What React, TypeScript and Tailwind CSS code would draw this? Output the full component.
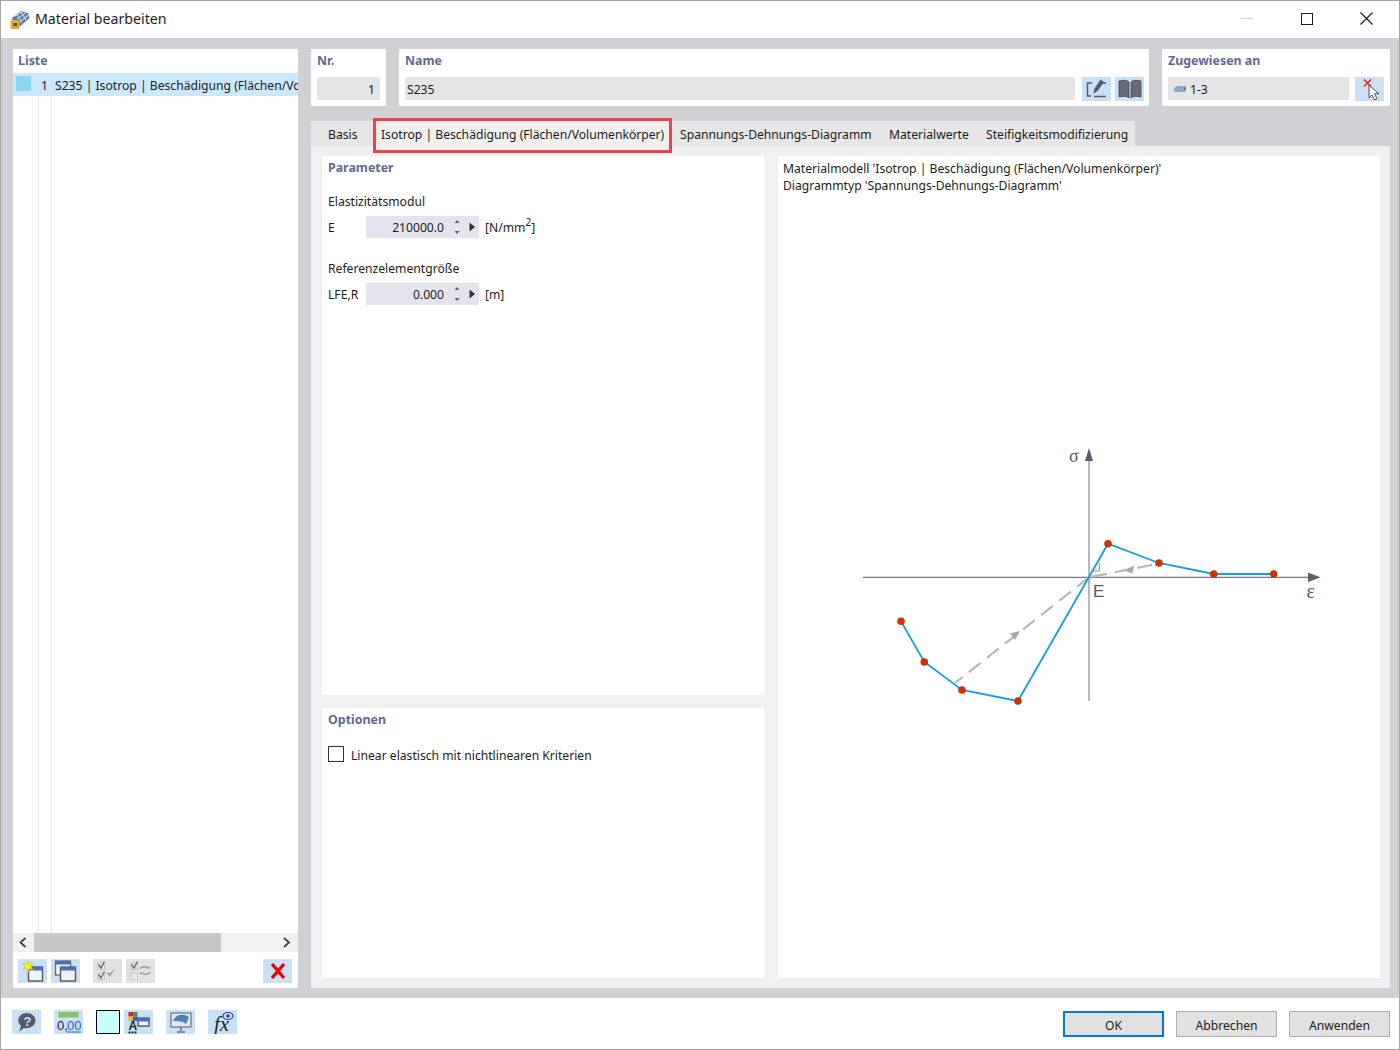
import React from "react";

const label = "text-[12.4px] leading-[16px] font-bold text-[#5f6a94]";

function IconBtn({ children, grey, className = "" }: { children?: React.ReactNode; grey?: boolean; className?: string }) {
  return (
    <div className={`w-[29px] h-[24px] flex items-center justify-center shrink-0 ${grey ? "bg-[#e2e2e2]" : "bg-[#c8e1f7]"} ${className}`}>
      <svg width="24" height="24" viewBox="0 0 24 24">{children}</svg>
    </div>
  );
}

function Win({ x, y, w = 13, h = 13, dark = "#55585f" }: { x: number; y: number; w?: number; h?: number; dark?: string }) {
  return (
    <g>
      <rect x={x} y={y} width={w} height={h} fill="#f2f2f2" stroke={dark} strokeWidth="1.4" />
      <rect x={x} y={y} width={w} height="3.5" fill="#4a6fb5" />
    </g>
  );
}

function Field({ sym, value, unit }: { sym: string; value: string; unit: React.ReactNode }) {
  return (
    <div className="flex items-center h-[22px]">
      <div className="w-[38px] pt-px">{sym}</div>
      <div className="w-[113px] h-[22px] bg-[#e4e4ef] flex items-center">
        <div className="w-[78px] text-right pt-px">{value}</div>
        <svg width="35" height="22" viewBox="0 0 35 22">
          <path d="M10.500 7l2.500-3 2.500 3zM10.500 15l2.500 3 2.500-3z" fill="#666" />
          <path d="M25.500 6.500l5.500 4.500-5.500 4.500z" fill="#333" />
        </svg>
      </div>
      <div className="ml-[6px] pt-px">{unit}</div>
    </div>
  );
}

function Tab({ w, pl, text, active }: { w: string; pl: string; text: string; active?: boolean }) {
  return (
    <div className={`relative h-[25px] flex items-center pt-[2px] ${w} ${pl} ${active ? "bg-[#f0f0f0]" : "bg-[#e6e6e6]"}`}>
      {text}
      {active && <div className="absolute left-0 right-0 top-[-3px] bottom-[-7px] border-[3px] border-[#f0404e]" />}
    </div>
  );
}

function Diagram() {
  const blue = "#149fdc";
  const red = "#cc3300";
  const pts = [[1108, 543.7], [1159, 563], [1213.7, 574], [1273.7, 574], [901, 621.3], [924.3, 662], [962, 690], [1018, 701]];
  return (
    <svg className="block flex-1 w-full" viewBox="778 193 602 785">
      <line x1="1089" y1="458" x2="1089" y2="701" stroke="#b0b0bc" strokeWidth="1.8" />
      <path d="M1085 461l4-13 4 13z" fill="#5a5c72" />
      <line x1="863" y1="577.3" x2="1310" y2="577.3" stroke="#77788c" strokeWidth="1.2" />
      <path d="M1308 572.5l12.5 4.800-12.500 4.800z" fill="#5a5c72" />
      <path d="M1091.7 571h7.600v-8" fill="none" stroke="#8a8a9c" strokeWidth="1" />
      <path d="M1152 565L1089 577.3M1089 577.3L955 683" fill="none" stroke="#b6b6c0" strokeWidth="2.200" strokeDasharray="15 8" />
      <path d="M1124 570.500l10-5-1.500 8z" fill="#a8a8b4" />
      <path d="M1020 631l-10 2.500 5 6.500z" fill="#a8a8b4" />
      <polyline points="901,621.3 924.3,662 962,690 1018,701 1108,543.7 1159,563 1213.7,574 1273.7,574" fill="none" stroke={blue} strokeWidth="1.800" />
      {pts.map(([x, y]) => (
        <circle key={x} cx={x} cy={y} r="3.800" fill={red} />
      ))}
      <text x="1069" y="462" fontSize="18" fill="#555a70" fontFamily="'Liberation Serif', serif">σ</text>
      <text x="1093" y="597" fontSize="17" fill="#555a70" fontFamily="'Liberation Sans', sans-serif">E</text>
      <text x="1306.500" y="598" fontSize="20" fill="#555a70" fontFamily="'Liberation Serif', serif">ε</text>
    </svg>
  );
}

export default function App() {
  return (
    <div className="w-[1400px] h-[1050px] flex flex-col bg-white border border-[#a6a6a6] text-[12.15px] leading-[16px] text-[#1c1c1c] font-['Noto_Sans',sans-serif] overflow-hidden">
      {/* title bar */}
      <div className="h-[37px] flex items-center shrink-0">
        <svg className="ml-[8px]" width="22" height="22" viewBox="0 0 22 22">
          <path d="M3 9l9-7 7 2 1.500 5-9 8-6-2z" fill="#5f7aa8" />
          <path d="M6 7l8-5M8 10l9-6.500M10.500 13l9-7M8 5l5 9M12 3l5 8" stroke="#c4d2e8" strokeWidth="1.100" />
          <rect x="1.500" y="11" width="9" height="9" rx="1.500" fill="#d9ad28" />
          <rect x="4.500" y="14" width="3.500" height="3" fill="#5c4a10" />
        </svg>
        <div className="ml-[4px] text-[14.2px] -mt-[1px]">Material bearbeiten</div>
        <div className="ml-auto flex items-center -mt-[2px]">
          <div className="w-[13px] h-px bg-[#d0d0d0]" />
          <div className="ml-[47px] w-[12px] h-[12px] border-[1.5px] border-[#222]" />
          <svg className="ml-[47px] mr-[26px]" width="13" height="13" viewBox="0 0 13 13">
            <path d="M.5.5l12 12M12.500.5l-12 12" stroke="#222" strokeWidth="1.300" />
          </svg>
        </div>
      </div>

      {/* body */}
      <div className="flex-1 bg-[#d0d0d5] flex gap-[13px] pl-[12px] pt-[11px] pb-[10px] min-h-0">
        {/* list */}
        <div className="w-[285px] bg-white flex flex-col">
          <div className={`${label} pl-[5px] pt-[4px] h-[24px]`}>Liste</div>
          <div className="h-[23px] bg-[#cce8ff] flex items-center whitespace-nowrap overflow-hidden">
            <div className="ml-[3px] w-[15px] h-[15px] bg-[#91d7f5] shrink-0 -mt-[2px]" />
            <div className="w-[17px] text-right shrink-0 pt-[2px]">1</div>
            <div className="ml-[7px] pt-[2px]">S235 | Isotrop | Beschädigung (Flächen/Volumenkörper)</div>
          </div>
          <div className="flex-1 flex">
            <div className="ml-[25px] w-[14px] border-x border-[#ebebeb]" />
          </div>
          <div className="h-[19px] bg-[#f0f0f0] flex items-center">
            <svg className="w-[21px] shrink-0" width="21" height="19" viewBox="0 0 21 19">
              <path d="M12.500 5l-5 4.500 5 4.500" fill="none" stroke="#444" strokeWidth="1.800" />
            </svg>
            <div className="w-[187px] h-[19px] bg-[#c8c8c8]" />
            <svg className="ml-auto" width="21" height="19" viewBox="0 0 21 19">
              <path d="M7 5l5 4.500-5 4.500" fill="none" stroke="#444" strokeWidth="1.800" />
            </svg>
          </div>
          <div className="h-[36px] flex items-start pt-[7px] pl-[5px]">
            <IconBtn>
              <Win x={7.500} y={8} w={14} h={14} />
              <path d="M7 2l1.500 3 3.500-.5-2 3 2 3-3.500-.8L7 13l-1.300-3.300-3.500.8 2-3-2-3 3.500.5z" fill="#f7ee1e" stroke="#c4b800" strokeWidth=".5" />
            </IconBtn>
            <IconBtn className="ml-[4px]">
              <Win x={1.500} y={2} w={15} h={14} dark="#6a7080" />
              <Win x={6.500} y={8} w={15} h={14} />
            </IconBtn>
            <IconBtn grey className="ml-[13px]">
              <rect x="2" y="4" width="6.500" height="6.500" fill="#e8e8e8" stroke="#bbb" strokeWidth=".8" />
              <rect x="2" y="14" width="6.500" height="6.500" fill="#e8e8e8" stroke="#bbb" strokeWidth=".8" />
              <path d="M2.500 5.500l2.500 3.500 3.500-6.500M2.500 15.500l2.500 3.500 3.500-6.500" fill="none" stroke="#6a6a6a" strokeWidth="1.400" />
              <path d="M10.500 13l3 5 6-9-6 5.500z" fill="#999" />
            </IconBtn>
            <IconBtn grey className="ml-[4px]">
              <rect x="2" y="4" width="6.500" height="6.500" fill="#e8e8e8" stroke="#bbb" strokeWidth=".8" />
              <rect x="2" y="14" width="6.500" height="6.500" fill="#eaeaea" stroke="#c4c4c4" strokeWidth=".8" />
              <path d="M2.500 5.500l2.500 3.500 3.500-6.500" fill="none" stroke="#6a6a6a" strokeWidth="1.400" />
              <path d="M11 10c1-2.500 6-3 8-1l2-.5M21 13c-1 2.500-6 3-8 1l-2 .5" fill="none" stroke="#999" strokeWidth="1.500" />
            </IconBtn>
            <IconBtn className="ml-auto mr-[6px]">
              <path d="M6 5l12 14M18 5L6 19" stroke="#f00000" strokeWidth="3.400" />
            </IconBtn>
          </div>
        </div>

        {/* right */}
        <div className="w-[1079px] flex flex-col">
          <div className="h-[57px] flex gap-[13px] shrink-0">
            <div className="w-[75px] bg-white px-[6px] pt-[4px]">
              <div className={label}>Nr.</div>
              <div className="mt-[8px] h-[23px] bg-[#e5e5e5] flex items-center justify-end pr-[5px] pt-[3px]">1</div>
            </div>
            <div className="w-[750px] bg-white px-[6px] pt-[4px]">
              <div className={label}>Name</div>
              <div className="mt-[8px] flex">
                <div className="w-[670px] h-[23px] shrink-0 bg-[#e5e5e5] flex items-center pl-[2px] pt-[3px]">S235</div>
                <IconBtn className="ml-[7px]">
                  <path d="M7 6H2.500v13H6M9 19.500h12M18 6h3" fill="none" stroke="#555c66" strokeWidth="1.500" />
                  <path d="M8.500 17l1-5.500L15.500 2.500l3.500 2.500-6 8.500z" fill="#555c66" />
                </IconBtn>
                <IconBtn className="ml-[4px]">
                  <path d="M1 4c4-1 8-1 10 1v16c-2-2-6-2-10-1zM23 4c-4-1-8-1-10 1v16c2-2 6-2 10-1z" fill="#666c76" stroke="#44484f" strokeWidth=".8" />
                </IconBtn>
              </div>
            </div>
            <div className="w-[228px] bg-white px-[6px] pt-[4px]">
              <div className={label}>Zugewiesen an</div>
              <div className="mt-[8px] flex">
                <div className="w-[181px] h-[23px] bg-[#e5e5e5] flex items-center pl-[6px]">
                  <svg width="12" height="8" viewBox="0 0 12 8">
                    <path d="M0 3l3-2h9l-2 2v4H0z" fill="#8fa8c8" />
                    <path d="M10 3l2-2v4l-2 2z" fill="#5f7ea8" />
                  </svg>
                  <span className="ml-[4px] pt-[3px]">1-3</span>
                </div>
                <IconBtn className="ml-[6px]">
                  <path d="M11 8v13l3-3 2.500 5 2.500-1.200-2.500-5h4.500z" fill="#fff" stroke="#555" strokeWidth="1" />
                  <path d="M6 2.500l7 7M13 2.500l-7 7" stroke="#f02020" strokeWidth="1.600" />
                </IconBtn>
              </div>
            </div>
          </div>

          <div className="mt-[15px] flex shrink-0 whitespace-nowrap">
            <Tab w="w-[62px]" pl="pl-[17px]" text="Basis" />
            <Tab w="w-[299px]" pl="pl-[8px]" text="Isotrop | Beschädigung (Flächen/Volumenkörper)" active />
            <Tab w="w-[209px]" pl="pl-[8px]" text="Spannungs-Dehnungs-Diagramm" />
            <Tab w="w-[97px]" pl="pl-[8px]" text="Materialwerte" />
            <Tab w="w-[157px]" pl="pl-[8px]" text="Steifigkeitsmodifizierung" />
          </div>

          <div className="flex-1 bg-[#f0f0f0] flex gap-[13px] pl-[11px] pr-[10px] py-[10px] min-h-0">
            <div className="w-[443px] flex flex-col gap-[13px]">
              <div className="h-[539px] bg-white px-[6px] pt-[4px]">
                <div className={label}>Parameter</div>
                <div className="mt-[18px]">Elastizitätsmodul</div>
                <div className="mt-[6px]">
                  <Field sym="E" value="210000.0" unit={<span>[N/mm<sup className="text-[10px] align-[1px] leading-none">2</sup>]</span>} />
                </div>
                <div className="mt-[23px]">Referenzelementgröße</div>
                <div className="mt-[6px]">
                  <Field sym="LFE,R" value="0.000" unit="[m]" />
                </div>
              </div>
              <div className="flex-1 bg-white px-[6px] pt-[4px]">
                <div className={label}>Optionen</div>
                <div className="mt-[18px] flex items-start">
                  <div className="w-[16px] h-[16px] border border-[#333] bg-white" />
                  <div className="ml-[7px] mt-[2px]">Linear elastisch mit nichtlinearen Kriterien</div>
                </div>
              </div>
            </div>
            <div className="w-[602px] bg-white flex flex-col">
              <div className="h-[37px] pl-[5px] pt-[4px] shrink-0 leading-[17px]">
                <div>Materialmodell 'Isotrop | Beschädigung (Flächen/Volumenkörper)'</div>
                <div>Diagrammtyp 'Spannungs-Dehnungs-Diagramm'</div>
              </div>
              <Diagram />
            </div>
          </div>
        </div>
      </div>

      {/* footer */}
      <div className="h-[51px] shrink-0 flex items-start pt-[12px] pl-[11px] pr-[9px]">
        <IconBtn>
          <path d="M12 3a8.500 7.500 0 0 1 3 14.500c-2 .8-4 .8-6 .5l-5 3.500 2-5.500A8.500 7.500 0 0 1 12 3z" fill="#555c66" />
          <text x="12.500" y="15.500" fontSize="13" fontWeight="bold" fill="#c8e1f7" textAnchor="middle" fontFamily="'Liberation Sans', sans-serif">?</text>
        </IconBtn>
        <IconBtn className="ml-[13px]">
          <rect x="1.500" y="2" width="20" height="5.500" fill="#8cc06e" />
          <text x="0" y="20" fontSize="13" fill="#222" fontFamily="'Liberation Sans', sans-serif">0,</text>
          <text x="10" y="20" fontSize="13" fill="#2a62c8" fontFamily="'Liberation Sans', sans-serif">00</text>
          <line x1="10" y1="22" x2="24" y2="22" stroke="#2a62c8" />
        </IconBtn>
        <div className="ml-[13px] w-[24px] h-[24px] bg-[#c8ffff] border border-black" />
        <IconBtn className="ml-[4px]">
          <rect x="1.500" y="2" width="4.500" height="4.500" fill="#e02020" /><rect x="6" y="2" width="4.500" height="4.500" fill="#40a040" />
          <rect x="1.500" y="6.500" width="4.500" height="4.500" fill="#e0c020" /><rect x="6" y="6.500" width="4.500" height="4.500" fill="#5050d0" />
          <text x="1.500" y="20" fontSize="12" fontWeight="bold" fill="#222" fontFamily="'Liberation Sans', sans-serif">A</text>
          <Win x={11} y={8} w={11} h={8} />
          <path d="M1.500 22.500h9" stroke="#222" strokeWidth="2" strokeDasharray="2 1" />
        </IconBtn>
        <IconBtn className="ml-[13px]">
          <rect x="2" y="3" width="20" height="14" fill="#dfe7f0" stroke="#7a808a" strokeWidth="1.400" />
          <path d="M4 11c3-7 10-8 16-4l-3 7c-3-3-8-3-13-3z" fill="#4f7fb0" />
          <path d="M12 17v4M8 22h8" stroke="#6a707a" strokeWidth="1.500" />
        </IconBtn>
        <IconBtn className="ml-[13px]">
          <text x="3" y="21" fontSize="21" fontStyle="italic" fill="#222" fontFamily="'Liberation Serif', serif">fx</text>
          <ellipse cx="17" cy="6" rx="5" ry="3.500" fill="none" stroke="#3a3a90" strokeWidth="1.200" />
          <circle cx="17" cy="6" r="1.800" fill="#3a3a90" />
        </IconBtn>
        <div className="ml-auto flex gap-[12px] pt-px">
          <div className="w-[101px] h-[26px] bg-[#e1e1e1] border-2 border-[#0078d7] flex items-center justify-center pt-[3px]">OK</div>
          <div className="w-[101px] h-[26px] bg-[#e1e1e1] border border-[#adadad] flex items-center justify-center pt-[3px]">Abbrechen</div>
          <div className="w-[101px] h-[26px] bg-[#e1e1e1] border border-[#adadad] flex items-center justify-center pt-[3px]">Anwenden</div>
        </div>
      </div>
    </div>
  );
}
